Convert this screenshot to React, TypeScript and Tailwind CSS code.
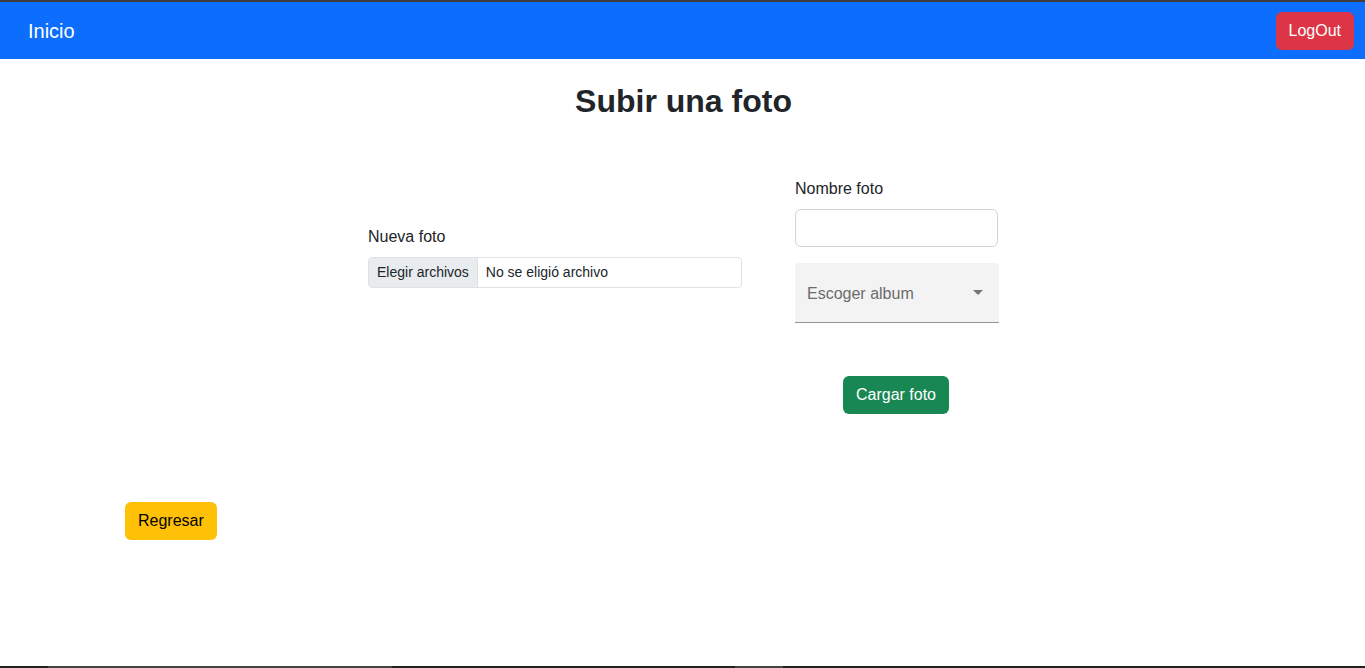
import React from "react";

export default function App() {
  return (
    <div className="h-[668px] w-full flex flex-col bg-white text-[#212529] font-['Liberation_Sans',Arial,sans-serif] overflow-hidden">
      <div className="h-[2px] bg-[#3c3c3c] shrink-0" />
      <nav className="h-[57px] shrink-0 bg-[#0d6efd] flex items-center justify-between pl-[28px] pr-[11px]">
        <span className="text-[20px] leading-[30px] text-white">Inicio</span>
        <button className="h-[38px] px-[13px] rounded-[6px] bg-[#dc3545] text-white text-[16px] leading-[24px]">
          LogOut
        </button>
      </nav>
      <main className="flex-1 flex flex-col">
        <h2 className="mt-[23px] pl-[2px] text-center text-[32px] font-bold leading-[38px]">Subir una foto</h2>
        <div className="flex justify-center gap-[53px] mt-[57px] pl-[2px]">
          <div className="w-[374px] pt-[48px]">
            <label className="block text-[16px] leading-[24px] mb-[8px]">Nueva foto</label>
            <div className="h-[31px] flex border border-[#dee2e6] rounded-[4px] overflow-hidden text-[14px]">
              <span className="flex items-center px-[8px] bg-[#e9ecef] border-r border-[#dee2e6]">Elegir archivos</span>
              <span className="flex items-center px-[8px]">No se eligió archivo</span>
            </div>
          </div>
          <div className="w-[204px] flex flex-col">
            <label className="block text-[16px] leading-[24px] mb-[8px]">Nombre foto</label>
            <div className="h-[38px] w-[203px] border border-[#ced4da] rounded-[6px] bg-white" />
            <div className="mt-[16px] h-[60px] bg-[#f3f3f3] rounded-t-[4px] border-b border-[#949494] flex items-center justify-between pl-[12px] pr-[16px] pt-[2px]">
              <span className="text-[16px] text-[#6b6b6b]">Escoger album</span>
              <svg width="10" height="5" viewBox="0 0 10 5" className="mb-[2px]">
                <path d="M0 0 L10 0 L5 5 Z" fill="#757575" />
              </svg>
            </div>
            <div className="flex justify-center mt-[53px] pr-[2px]">
              <button className="h-[38px] px-[13px] rounded-[6px] bg-[#198754] text-white text-[16px] leading-[24px]">
                Cargar foto
              </button>
            </div>
          </div>
        </div>
        <div className="mt-[88px] pl-[125px]">
          <button className="h-[38px] px-[13px] rounded-[6px] bg-[#ffc107] text-black text-[16px] leading-[24px]">
            Regresar
          </button>
        </div>
      </main>
      <div className="h-[2px] shrink-0 bg-[#222222] flex">
        <div className="w-[48px]" />
        <div className="w-[344px] bg-[#444444]" />
        <div className="w-[343px]" />
        <div className="w-[48px] bg-[#444444]" />
      </div>
    </div>
  );
}
